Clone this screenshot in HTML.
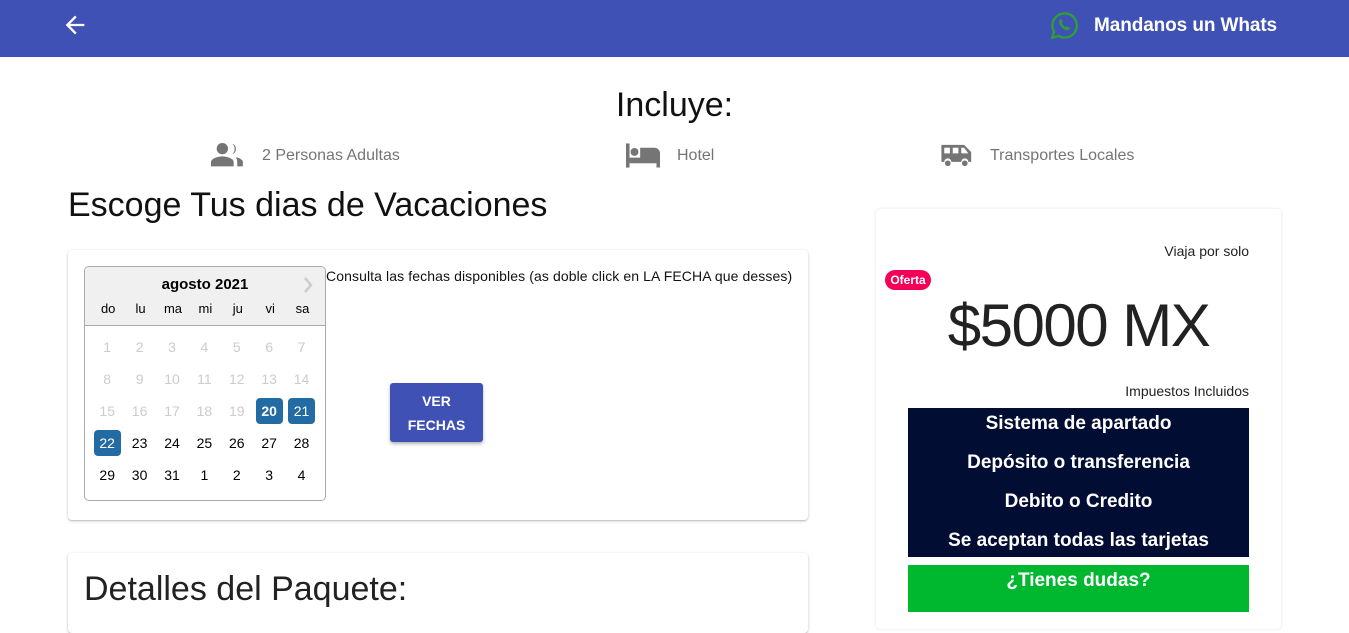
<!DOCTYPE html><html><head><style>
body{margin:0;width:1349px;height:612px;overflow:hidden;background:#fff;font-family:"Liberation Sans",sans-serif;position:relative}
.a{position:absolute}
.card{position:absolute;background:#fff;border-radius:4px;box-shadow:0 1px 3px rgba(0,0,0,.2),0 1px 1px rgba(0,0,0,.12)}
.cal td{width:32.4px;height:32px;text-align:center;font-size:14px;padding:0}
.g{color:#ccc}.s span{display:inline-block;width:27px;height:26px;line-height:26px;background:#236ba3;color:#fff;border-radius:4px}
.nv div{height:39px;line-height:32px;text-align:center;color:#fff;font-weight:bold;font-size:19px}
</style></head><body>
<div class="a" style="left:0;top:0;width:1349px;height:57px;background:#3f51b5"></div>
<svg class="a" style="left:61px;top:11px" width="28" height="28" viewBox="0 0 24 24"><path d="M20 11H7.83l5.59-5.59L12 4l-8 8 8 8 1.41-1.41L7.83 13H20v-2z" fill="#fff"/></svg>
<svg class="a" style="left:1049px;top:10px" width="31" height="31" viewBox="0 0 32 32"><path d="M16 3.5A12.5 12.5 0 0 0 5.2 22.3L3.5 28.5l6.4-1.7A12.5 12.5 0 1 0 16 3.5z" fill="none" stroke="#2e9c3a" stroke-width="2.5"/><path d="M11.5 9.5c.6-.4 1.3 0 1.6.7l.9 2c.2.5-.3 1-.7 1.4.8 1.8 2.2 3.2 4 4 .4-.4.9-1 1.4-.7l2 .9c.7.3 1 1 .6 1.7-.8 1.6-2.7 2-4.5 1.1-2.6-1.2-4.6-3.3-5.9-5.9-.8-1.8-.6-3.6.6-5.2z" fill="#2e9c3a"/></svg>
<div class="a" style="left:1094px;top:15px;color:#fff;font-weight:bold;font-size:19px;letter-spacing:-0.1px">Mandanos un Whats</div>
<div class="a" style="left:0;width:1349px;top:86px;text-align:center;font-size:34px;color:#111">Incluye:</div>
<svg class="a" style="left:211px;top:142px" width="34" height="26" viewBox="0 0 24 18"><circle cx="8" cy="4.5" r="4" fill="#757575"/><path d="M0 17v-3c0-2.5 5-4 8-4s8 1.5 8 4v3z" fill="#757575"/><path d="M15 1a4 4 0 0 1 0 7.5 5 5 0 0 0 0-7.5zM17.5 10.5c2.5.6 5 1.8 5 3.5v3h-4v-3c0-1.4-.4-2.5-1-3.5z" fill="#757575"/></svg>
<div class="a" style="left:262px;top:147px;font-size:16px;color:#757575">2 Personas Adultas</div>
<svg class="a" style="left:626px;top:143px" width="34" height="25" viewBox="0 0 24 17"><rect x="0" y="0" width="2.5" height="17" fill="#757575"/><circle cx="6" cy="6" r="2.8" fill="#757575"/><path d="M10 3h10a4 4 0 0 1 4 4v10h-2.5v-3H2.5v-4H10z" fill="#757575"/></svg>
<div class="a" style="left:677px;top:147px;font-size:16px;color:#757575">Hotel</div>
<svg class="a" style="left:940px;top:143px" width="34" height="25" viewBox="0 0 24 17"><path d="M1 1h16l5 5v7h-2a2.5 2.5 0 0 0-5 0H8a2.5 2.5 0 0 0-5 0H1z" fill="#757575"/><rect x="3" y="3" width="4" height="4" fill="#fff"/><rect x="9" y="3" width="4" height="4" fill="#fff"/><path d="M15 3h2l3 4h-5z" fill="#fff"/><circle cx="5.5" cy="14" r="2" fill="#757575"/><circle cx="17.5" cy="14" r="2" fill="#757575"/></svg>
<div class="a" style="left:990px;top:147px;font-size:16px;color:#757575">Transportes Locales</div>
<div class="a" style="left:68px;top:186px;font-size:34px;color:#111">Escoge Tus dias de Vacaciones</div>
<div class="card" style="left:68px;top:250px;width:740px;height:270px"></div>
<div class="a" style="left:84px;top:266px;width:240px;height:233px;border:1px solid #aaa;border-radius:5px;overflow:hidden">
<div style="background:#f0f0f0;height:58px;border-bottom:1px solid #aaa;position:relative">
<div style="position:absolute;left:0;right:0;top:9px;text-align:center;font-weight:bold;font-size:15px">agosto 2021</div>
<svg style="position:absolute;right:12px;top:10px" width="10" height="16" viewBox="0 0 10 16"><path d="M2 1l6 7-6 7" fill="none" stroke="#ccc" stroke-width="2.5"/></svg>
<div style="position:absolute;top:34px;left:7px;display:flex;font-size:13px">
<span style="width:32.4px;text-align:center">do</span><span style="width:32.4px;text-align:center">lu</span><span style="width:32.4px;text-align:center">ma</span><span style="width:32.4px;text-align:center">mi</span><span style="width:32.4px;text-align:center">ju</span><span style="width:32.4px;text-align:center">vi</span><span style="width:32.4px;text-align:center">sa</span></div></div>
<table class="cal" style="border-collapse:collapse;margin:5px 0 0 6px">
<tr class="g"><td>1</td><td>2</td><td>3</td><td>4</td><td>5</td><td>6</td><td>7</td></tr>
<tr class="g"><td>8</td><td>9</td><td>10</td><td>11</td><td>12</td><td>13</td><td>14</td></tr>
<tr><td class="g">15</td><td class="g">16</td><td class="g">17</td><td class="g">18</td><td class="g">19</td><td class="s"><span><b>20</b></span></td><td class="s"><span>21</span></td></tr>
<tr><td class="s"><span>22</span></td><td>23</td><td>24</td><td>25</td><td>26</td><td>27</td><td>28</td></tr>
<tr><td>29</td><td>30</td><td>31</td><td>1</td><td>2</td><td>3</td><td>4</td></tr>
</table></div>
<div class="a" style="left:326px;top:268px;font-size:14px;color:#111;letter-spacing:0.1px">Consulta las fechas disponibles (as doble click en LA FECHA que desses)</div>
<div class="a" style="left:390px;top:383px;width:93px;height:59px;background:#3f51b5;border-radius:3px;box-shadow:0 2px 3px rgba(0,0,0,.3);color:#fff;font-weight:bold;font-size:14px;text-align:center;line-height:24px;padding-top:6px;box-sizing:border-box">VER<br>FECHAS</div>
<div class="card" style="left:68px;top:553px;width:740px;height:80px"></div>
<div class="a" style="left:84px;top:570px;font-size:34px;color:#222">Detalles del Paquete:</div>
<div class="card" style="left:876px;top:209px;width:405px;height:420px;box-shadow:0 0 3px rgba(0,0,0,.12)"></div>
<div class="a" style="left:1100px;width:149px;top:243px;text-align:right;font-size:14px;color:#222">Viaja por solo</div>
<div class="a" style="left:885px;top:270px;width:46px;height:20px;border-radius:10px;background:#f50057;color:#fff;font-weight:bold;font-size:12px;text-align:center;line-height:20px">Oferta</div>
<div class="a" style="left:876px;width:405px;top:291px;text-align:center;font-size:60px;color:#222;letter-spacing:-1.5px">$5000 MX</div>
<div class="a" style="left:1050px;width:199px;top:383px;text-align:right;font-size:14px;color:#222">Impuestos Incluidos</div>
<div class="a nv" style="left:908px;top:408px;width:341px;height:149px;background:#020d33"><div>Sistema de apartado</div><div>Depósito o transferencia</div><div>Debito o Credito</div><div>Se aceptan todas las tarjetas</div></div>
<div class="a" style="left:908px;top:565px;width:341px;height:47px;background:#00b82f;color:#fff;font-weight:bold;font-size:19px;text-align:center;line-height:32px">¿Tienes dudas?</div>
</body></html>
